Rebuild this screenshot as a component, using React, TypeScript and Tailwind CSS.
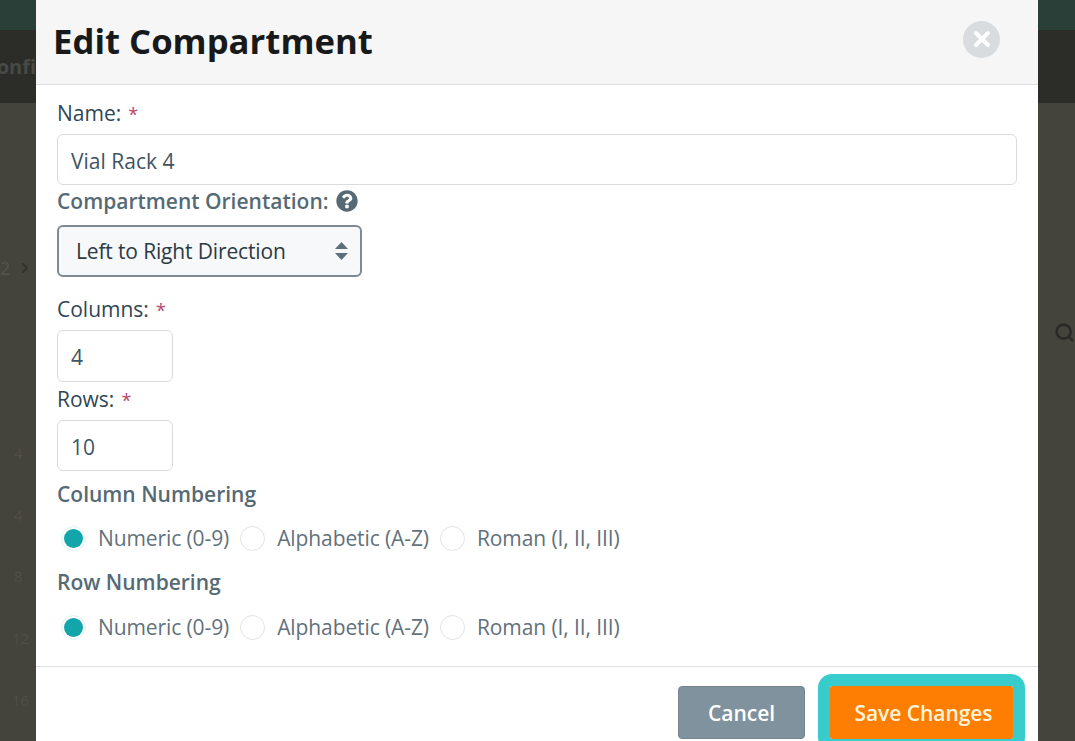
import { ChevronRight, Search } from 'lucide-react'

const font = { fontFamily: '"Open Sans", sans-serif' }

function Req() {
  return <span className="ml-[7px] text-[18px] text-[#b5476b]">*</span>
}

function Radio({ label, checked }: { label: string; checked?: boolean }) {
  return (
    <label className="flex items-center">
      {checked ? (
        <span className="flex h-[25px] w-[25px] items-center justify-center rounded-full border border-[#dff3f3]">
          <span className="h-[19px] w-[19px] rounded-full bg-[#12a5a9]" />
        </span>
      ) : (
        <span className="h-[25px] w-[25px] rounded-full border border-[#dfe3e6] bg-white" />
      )}
      <span className="ml-[12px] text-[21px] leading-[28px] tracking-[-0.1px] text-[#62717b]">{label}</span>
    </label>
  )
}

function RadioGroup() {
  return (
    <div className="ml-[4px] flex items-center gap-[11px]">
      <Radio label="Numeric (0-9)" checked />
      <Radio label="Alphabetic (A-Z)" />
      <Radio label="Roman (I, II, III)" />
    </div>
  )
}

export default function App() {
  return (
    <div className="flex h-[741px] w-[1075px] overflow-hidden bg-[#44433c]" style={font}>
      <div className="w-[36px] shrink-0">
        <div className="h-[30px] bg-[#2b3f39]" />
        <div className="flex h-[73px] items-center justify-end overflow-hidden whitespace-nowrap bg-[#2c2d29] text-[20px] font-bold text-[#474a45]">
          onfi
        </div>
        <div className="mt-[153px] flex h-[24px] items-center justify-between text-[18px] text-[#55544c]">
          2
          <ChevronRight className="mr-[3px] h-[16px] w-[16px] text-[#33332e]" strokeWidth={3} />
        </div>
        <div className="flex flex-col pl-[14px] pt-[162px] text-[15px] text-[#504f47]">
          <span className="h-[62px]">4</span>
          <span className="h-[61px]">4</span>
          <span className="h-[62px]">8</span>
          <span className="h-[62px] -ml-[2px]">12</span>
          <span className="-ml-[2px]">16</span>
        </div>
      </div>

      <div className="flex w-[1002px] shrink-0 flex-col bg-white">
        <div className="flex h-[85px] items-center justify-between border-b border-[#dcdfe1] bg-[#f6f6f6] pl-[17px] pr-[38px]">
          <h2 className="mb-[2px] text-[34.7px] font-bold leading-[42px] text-[#17191b]">Edit Compartment</h2>
          <button type="button" className="mb-[6px] flex h-[37px] w-[37px] items-center justify-center rounded-full bg-[#d9dcdf]">
            <svg width="20" height="20" viewBox="0 0 20 20" fill="none" stroke="white" strokeWidth="4" strokeLinecap="round">
              <path d="M4 4l12 12M16 4L4 16" />
            </svg>
          </button>
        </div>

        <div className="flex flex-1 flex-col px-[21px]">
          <label className="mt-[13px] block text-[21px] leading-[30px] text-[#2f4656]">
            Name:<Req />
          </label>
          <input
            readOnly
            value="Vial Rack 4"
            className="mt-[5px] h-[51px] w-[960px] rounded-[6px] border border-[#d8dcdf] px-[13px] pt-[2px] text-[21px] text-[#3f5461] outline-none"
            style={font}
          />
          <div className="mt-[1px] flex items-center text-[21px] font-semibold leading-[30px] text-[#566a76]">
            Compartment Orientation:
            <svg className="ml-[8px]" width="22" height="22" viewBox="0 0 512 512" fill="#566a76">
              <path d="M504 256c0 137-111 248-248 248S8 393 8 256 119 8 256 8s248 111 248 248zM262.7 90c-54.500 0-89.300 23-116.500 63.800-3.500 5.300-2.400 12.400 2.700 16.300l34.700 26.300c5.200 3.900 12.600 3 16.700-2.100 17.900-22.700 30.100-35.800 57.300-35.800 20.400 0 45.700 13.100 45.700 32.900 0 15-12.400 22.700-32.500 34C247.100 238.500 216 254.900 216 296v4c0 6.600 5.400 12 12 12h56c6.600 0 12-5.400 12-12v-1.300c0-28.500 83.200-29.700 83.200-106.700 0-58-60.200-102-116.500-102zM256 338c-25.400 0-46 20.600-46 46 0 25.400 20.600 46 46 46s46-20.600 46-46c0-25.400-20.600-46-46-46z" />
            </svg>
          </div>
          <div className="mt-[9px] flex h-[52px] w-[305px] items-center justify-between rounded-[6px] border-2 border-[#7d8a93] bg-[#f6f8fa] pl-[17px] pr-[11px] pt-[2px] text-[21px] tracking-[-0.15px] text-[#2c3a43]">
            Left to Right Direction
            <svg className="-mt-[2px]" width="15" height="20" viewBox="0 0 15 20" fill="#5d6f7b">
              <path d="M7.500 1L14 8H1zM7.500 19L1 12h13z" />
            </svg>
          </div>

          <label className="mt-[17px] block text-[21px] leading-[30px] text-[#2f4656]">
            Columns:<Req />
          </label>
          <input
            readOnly
            value="4"
            className="mt-[5px] h-[52px] w-[116px] rounded-[6px] border border-[#d8dcdf] px-[13px] pt-[2px] text-[21px] text-[#3f5461] outline-none"
            style={font}
          />
          <label className="mt-[2px] block text-[21px] leading-[30px] text-[#2f4656]">
            Rows:<Req />
          </label>
          <input
            readOnly
            value="10"
            className="mt-[5px] h-[51px] w-[116px] rounded-[6px] border border-[#d8dcdf] px-[13px] pt-[3px] text-[21px] text-[#3f5461] outline-none"
            style={font}
          />
          <div className="mt-[8px] text-[21px] font-semibold leading-[30px] text-[#566a76]">Column Numbering</div>
          <div className="mt-[15px]">
            <RadioGroup />
          </div>
          <div className="mt-[15px] text-[21px] font-semibold leading-[30px] text-[#566a76]">Row Numbering</div>
          <div className="mt-[16px]">
            <RadioGroup />
          </div>
        </div>

        <div className="flex h-[75px] shrink-0 items-start justify-end gap-[25px] border-t border-[#dcdfe1] pr-[25px] pt-[19px]">
          <button type="button" className="h-[53px] w-[127px] rounded-[4px] border border-[#73858f] bg-[#7f929d] pt-[2px] text-[21px] font-semibold text-white" style={font}>
            Cancel
          </button>
          <button type="button" className="h-[53px] w-[183px] rounded-[2px] bg-[#fd7e03] pl-[4px] pt-[2px] text-[21px] font-semibold tracking-[-0.05px] text-[#fff3d9] outline-[12px] outline-[#38cccc] [outline-style:solid] [outline-offset:0px]" style={font}>
            Save Changes
          </button>
        </div>
      </div>

      <div className="min-w-0 flex-1">
        <div className="h-[30px] bg-[#2b3f39]" />
        <div className="h-[73px] bg-[#2c2d29]" />
        <div className="flex justify-end pt-[219px]">
          <Search className="h-[21px] w-[21px] text-[#2a2a27]" strokeWidth={3} />
        </div>
      </div>
    </div>
  )
}
